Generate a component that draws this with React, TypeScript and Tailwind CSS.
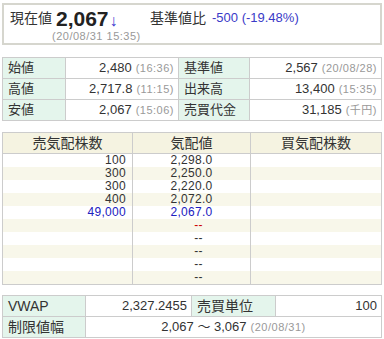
const labelCls = 'bg-[#e4f5ec] px-[5px] flex items-center'
const valueCls = 'bg-white px-[4px] flex items-center justify-end'

const Stamp = ({ children }: { children: string }) => (
  <span className="ml-[4px] text-[11px] tracking-[0.5px] text-[#999]">{children}</span>
)

const board = [
  { ask: '100', price: '2,298.0' },
  { ask: '300', price: '2,250.0' },
  { ask: '300', price: '2,220.0' },
  { ask: '400', price: '2,072.0' },
  { ask: '49,000', price: '2,067.0', blue: true },
  { ask: '', price: '--', red: true },
  { ask: '', price: '--' },
  { ask: '', price: '--' },
  { ask: '', price: '--' },
  { ask: '', price: '--' },
]

export default function App() {
  return (
    <div
      className="h-[339px] w-[384px] bg-white pl-[2px] pt-[3px] text-[13px] text-[#333]"
      style={{ fontFamily: '"Liberation Sans", "Noto Sans CJK JP", sans-serif' }}
    >
      {/* current price box */}
      <div className="h-[42px] w-[380px] border-2 border-[#d6d6ce] pl-[6px] pt-[2px]">
        <div className="flex h-[22px] items-center">
          <div className="flex w-[140px] items-center">
            <span className="w-[46px] text-[14px]">現在値</span>
            <span className="text-[21px] font-bold leading-none text-[#222]">2,067</span>
            <span className="ml-[1px] mt-[5px] text-[16px] font-light leading-none text-[#3b3bd0]">↓</span>
          </div>
          <span className="text-[14px]">基準値比</span>
          <span className="ml-[6px] text-[#3a3ac8]">-500 (-19.48%)</span>
        </div>
        <div className="pl-[42px] text-[11px] leading-[14px] tracking-[0.5px] text-[#999]">
          (20/08/31 15:35)
        </div>
      </div>

      {/* price summary */}
      <div className="mt-[12px] grid w-[380px] grid-cols-[62px_112px_70px_1fr] auto-rows-[20px] gap-px border border-[#ccc] bg-[#ccc]">
        <div className={labelCls}>始値</div>
        <div className={valueCls}>
          2,480<Stamp>(16:36)</Stamp>
        </div>
        <div className={labelCls}>基準値</div>
        <div className={valueCls}>
          2,567<Stamp>(20/08/28)</Stamp>
        </div>
        <div className={labelCls}>高値</div>
        <div className={valueCls}>
          2,717.8<Stamp>(11:15)</Stamp>
        </div>
        <div className={labelCls}>出来高</div>
        <div className={valueCls}>
          13,400<Stamp>(15:35)</Stamp>
        </div>
        <div className={labelCls}>安値</div>
        <div className={valueCls}>
          2,067<Stamp>(15:06)</Stamp>
        </div>
        <div className={labelCls}>売買代金</div>
        <div className={valueCls}>
          31,185<Stamp>(千円)</Stamp>
        </div>
      </div>

      {/* order book */}
      <div className="mt-[11px] w-[380px] border border-[#ccc]">
        <div className="flex h-[21px] border-b border-[#ccc] bg-[#f5f3e1] text-[14px]">
          <div className="flex w-[130px] items-center justify-center border-r border-[#ccc]">売気配株数</div>
          <div className="flex w-[118px] items-center justify-center border-r border-[#ccc]">気配値</div>
          <div className="flex flex-1 items-center justify-center">買気配株数</div>
        </div>
        {board.map((row, i) => (
          <div
            key={i}
            className={`flex h-[13px] text-[12px] leading-[13px] tracking-[0.3px] ${
              i % 2 === 1 ? 'bg-[#f8f7ea]' : 'bg-white'
            }`}
          >
            <div
              className={`w-[130px] border-r border-[#ccc] pr-[6px] text-right ${row.blue ? 'text-[#2020c0]' : ''}`}
            >
              {row.ask}
            </div>
            <div
              className={`w-[118px] border-r border-[#ccc] text-center ${
                row.blue ? 'text-[#2020c0]' : row.red ? 'text-[#cc0000]' : ''
              } ${row.price === '--' ? 'pl-[14px]' : ''}`}
            >
              {row.price}
            </div>
            <div className="flex-1" />
          </div>
        ))}
      </div>

      {/* vwap / limits */}
      <div className="mt-[10px] grid w-[380px] grid-cols-[82px_105px_83px_1fr] auto-rows-[20px] gap-px border border-[#ccc] bg-[#ccc] text-[14px]">
        <div className={labelCls}>VWAP</div>
        <div className={`${valueCls} text-[13px]`}>2,327.2455</div>
        <div className={labelCls}>売買単位</div>
        <div className={`${valueCls} text-[13px]`}>100</div>
        <div className={labelCls}>制限値幅</div>
        <div className="col-span-3 flex items-center justify-center bg-white text-[13px]">
          2,067 ～ 3,067<Stamp>(20/08/31)</Stamp>
        </div>
      </div>
    </div>
  )
}
